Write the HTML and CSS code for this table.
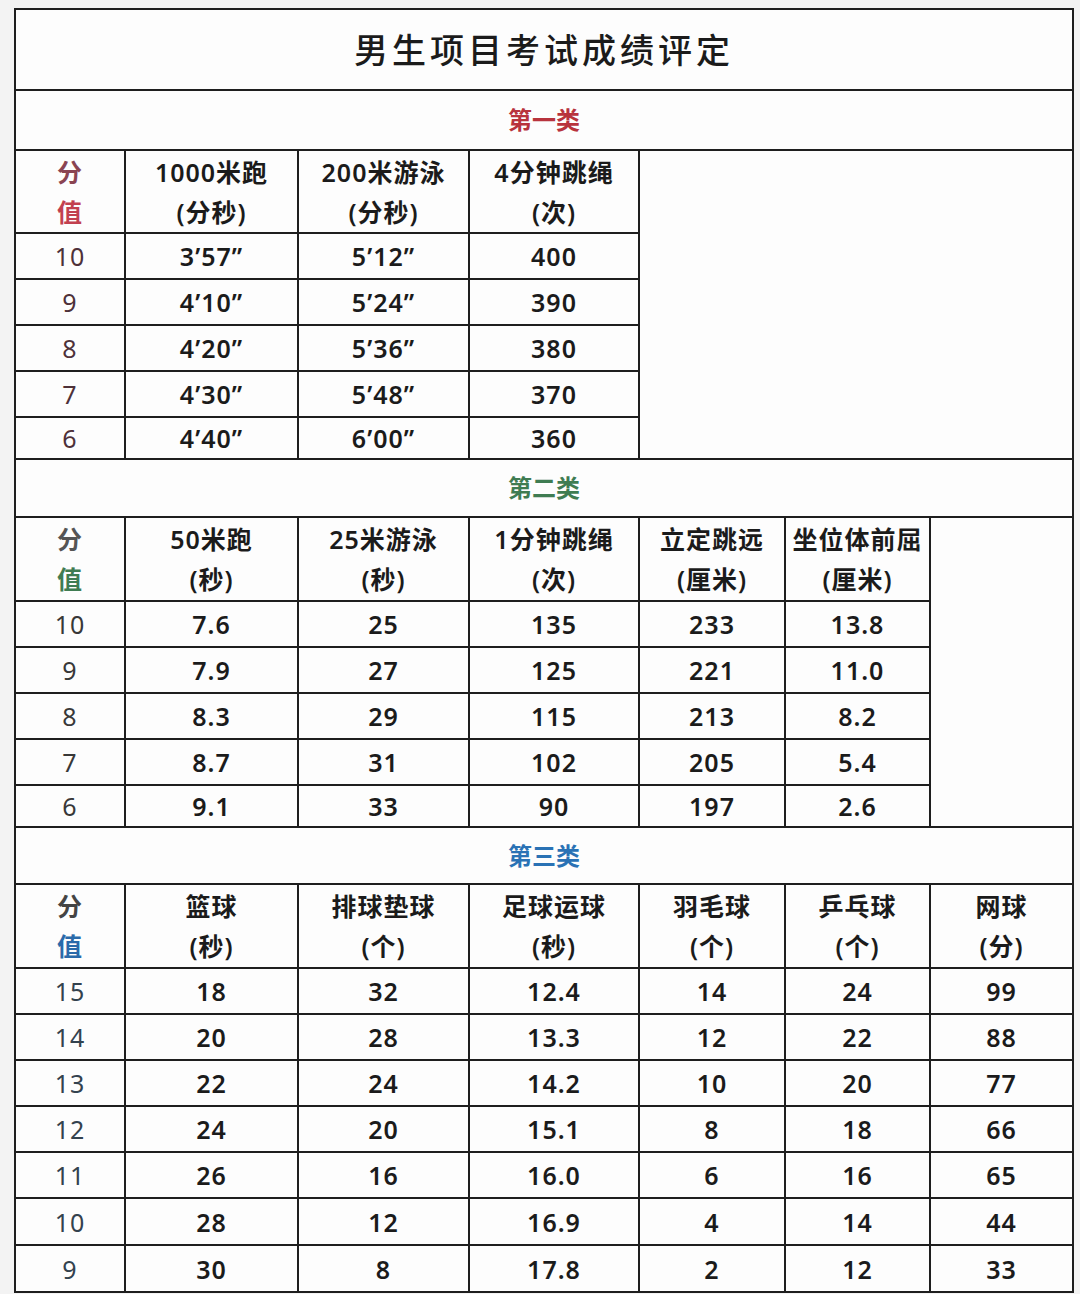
FILE: index.html
```html
<!DOCTYPE html>
<html lang="zh-CN">
<head>
<meta charset="utf-8">
<title>男生项目考试成绩评定</title>
<link rel="stylesheet" href="styles.css">
</head>
<body>
<table class="grade">
  <colgroup>
    <col class="c-score"><col class="c1"><col class="c2"><col class="c3"><col class="c4"><col class="c5"><col class="c6">
  </colgroup>
  <tr class="r-title"><td colspan="7" class="title">男生项目考试成绩评定</td></tr>

  <tr class="r-sec r-sec1"><td colspan="7" class="sec sec-red">第一类</td></tr>
  <tr class="r-head">
    <td class="score-head s1"><span class="fen">分</span><br><span class="zhi">值</span></td>
    <td>1000米跑<br>(分秒)</td>
    <td>200米游泳<br>(分秒)</td>
    <td>4分钟跳绳<br>(次)</td>
    <td class="blank" rowspan="6" colspan="3"></td>
  </tr>
  <tr class="r-data"><td class="score s1">10</td><td>3’57”</td><td>5’12”</td><td>400</td></tr>
  <tr class="r-data"><td class="score s1">9</td><td>4’10”</td><td>5’24”</td><td>390</td></tr>
  <tr class="r-data"><td class="score s1">8</td><td>4’20”</td><td>5’36”</td><td>380</td></tr>
  <tr class="r-data"><td class="score s1">7</td><td>4’30”</td><td>5’48”</td><td>370</td></tr>
  <tr class="r-data r-last"><td class="score s1">6</td><td>4’40”</td><td>6’00”</td><td>360</td></tr>

  <tr class="r-sec r-sec2"><td colspan="7" class="sec sec-green">第二类</td></tr>
  <tr class="r-head r-head2">
    <td class="score-head s2"><span class="fen">分</span><br><span class="zhi">值</span></td>
    <td>50米跑<br>(秒)</td>
    <td>25米游泳<br>(秒)</td>
    <td>1分钟跳绳<br>(次)</td>
    <td>立定跳远<br>(厘米)</td>
    <td>坐位体前屈<br>(厘米)</td>
    <td class="blank" rowspan="6"></td>
  </tr>
  <tr class="r-data"><td class="score s2">10</td><td>7.6</td><td>25</td><td>135</td><td>233</td><td>13.8</td></tr>
  <tr class="r-data"><td class="score s2">9</td><td>7.9</td><td>27</td><td>125</td><td>221</td><td>11.0</td></tr>
  <tr class="r-data"><td class="score s2">8</td><td>8.3</td><td>29</td><td>115</td><td>213</td><td>8.2</td></tr>
  <tr class="r-data"><td class="score s2">7</td><td>8.7</td><td>31</td><td>102</td><td>205</td><td>5.4</td></tr>
  <tr class="r-data r-last2"><td class="score s2">6</td><td>9.1</td><td>33</td><td>90</td><td>197</td><td>2.6</td></tr>

  <tr class="r-sec r-sec3"><td colspan="7" class="sec sec-blue">第三类</td></tr>
  <tr class="r-head r-head2">
    <td class="score-head s3"><span class="fen">分</span><br><span class="zhi">值</span></td>
    <td>篮球<br>(秒)</td>
    <td>排球垫球<br>(个)</td>
    <td>足球运球<br>(秒)</td>
    <td>羽毛球<br>(个)</td>
    <td>乒乓球<br>(个)</td>
    <td>网球<br>(分)</td>
  </tr>
  <tr class="r-data"><td class="score s3">15</td><td>18</td><td>32</td><td>12.4</td><td>14</td><td>24</td><td>99</td></tr>
  <tr class="r-data"><td class="score s3">14</td><td>20</td><td>28</td><td>13.3</td><td>12</td><td>22</td><td>88</td></tr>
  <tr class="r-data"><td class="score s3">13</td><td>22</td><td>24</td><td>14.2</td><td>10</td><td>20</td><td>77</td></tr>
  <tr class="r-data"><td class="score s3">12</td><td>24</td><td>20</td><td>15.1</td><td>8</td><td>18</td><td>66</td></tr>
  <tr class="r-data"><td class="score s3">11</td><td>26</td><td>16</td><td>16.0</td><td>6</td><td>16</td><td>65</td></tr>
  <tr class="r-data r-tall"><td class="score s3">10</td><td>28</td><td>12</td><td>16.9</td><td>4</td><td>14</td><td>44</td></tr>
  <tr class="r-data r-tall"><td class="score s3">9</td><td>30</td><td>8</td><td>17.8</td><td>2</td><td>12</td><td>33</td></tr>
</table>
</body>
</html>
```

FILE: styles.css
```css
html, body {
  margin: 0;
  padding: 0;
  background: #f3f3f3;
}

body {
  padding: 8px 8px 0 14px;
  font-family: "Noto Sans", "Noto Sans CJK SC", sans-serif;
  color: #1b1b1b;
}

.grade {
  border-collapse: collapse;
  table-layout: fixed;
  width: 1058px;
  background: #fdfdfd;
  border: 2px solid #1a1a1a;
}

.c-score { width: 110px; }
.c1 { width: 173px; }
.c2 { width: 171px; }
.c3 { width: 170px; }
.c4 { width: 146px; }
.c5 { width: 145px; }
.c6 { width: 143px; }

.grade td {
  border: 2px solid #1e1e1e;
  padding: 0;
  text-align: center;
  vertical-align: middle;
  font-size: 25px;
  font-weight: 600;
  letter-spacing: 1px;
  line-height: 40px;
}

.r-title { height: 81px; }
.grade .title {
  font-size: 34px;
  font-weight: 500;
  letter-spacing: 4px;
  line-height: 40px;
}

.r-sec1 { height: 60px; }
.r-sec2 { height: 58px; }
.r-sec3 { height: 57px; }

.grade .sec {
  font-size: 24px;
  font-weight: 700;
  letter-spacing: 0;
  line-height: 30px;
}
.sec-red { color: #b8333d; }
.sec-green { color: #3f7c52; }
.sec-blue { color: #2a72b5; }

.r-head { height: 83px; }
.r-head2 { height: 84px; }

.r-data { height: 46px; }
.r-last { height: 42px; }
.r-last2 { height: 41px; }
.r-tall { height: 47px; }

.grade td.blank {
  background: #fdfdfd;
}

.s1 .fen { color: #8a4452; }
.s1 .zhi { color: #c2404f; }
.s2 .fen { color: #555555; }
.s2 .zhi { color: #3f7c52; }
.s3 .fen { color: #444444; }
.s3 .zhi { color: #2a6aaa; }

.grade td.score { font-weight: 400; }
.score.s1 { color: #4e3139; }
.score.s2 { color: #383838; }
.score.s3 { color: #33424e; }
```
